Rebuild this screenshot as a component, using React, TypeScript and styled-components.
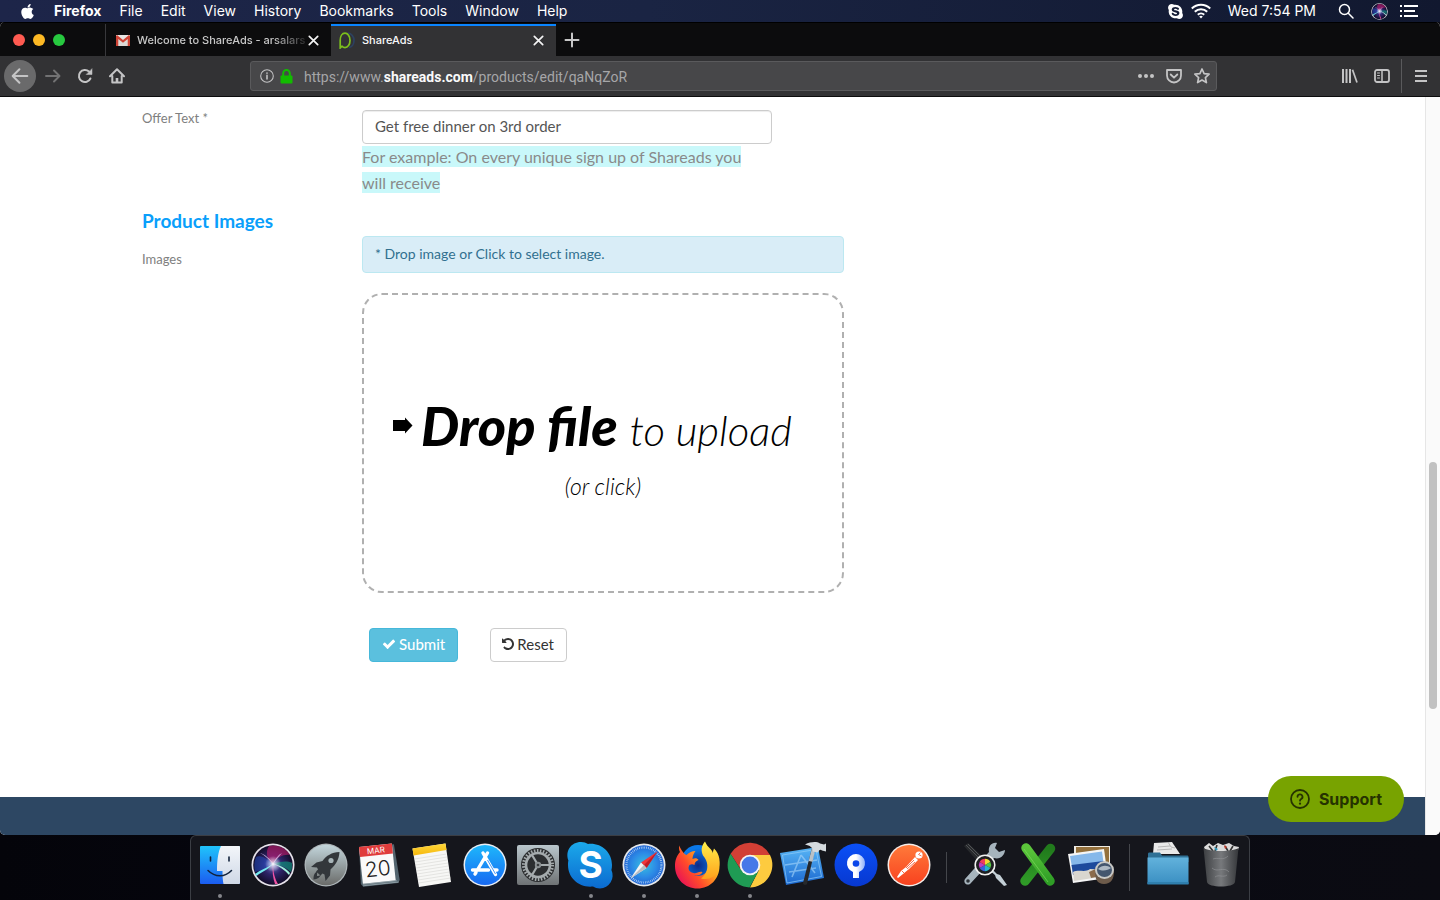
import React from "react";
import styled, { createGlobalStyle } from "styled-components";
import { FaApple, FaSkype } from "react-icons/fa";

const GlobalStyle = createGlobalStyle`
  *, *::before, *::after { box-sizing: border-box; }
  body { margin: 0; background: #07070d; }
  button, input { font: inherit; }
  svg { display: block; flex: none; }
`;

const ui = `Inter, "Liberation Sans", sans-serif`;
const site = `Lato, "Open Sans", sans-serif`;

const Desktop = styled.div`
  min-height: 100vh;
  display: flex;
  flex-direction: column;
  background: linear-gradient(90deg, #04040a, #080913 50%, #0b0b12);
  font-family: ${ui};
`;

/* ---------- system menu bar ---------- */

const MenuBar = styled.header`
  height: 22px;
  display: flex;
  align-items: center;
  justify-content: space-between;
  padding: 0 22px 0 19px;
  background: linear-gradient(90deg, #1d2549, #1a2443 45%, #11182f);
  color: #fff;
  font-size: 14px;
  line-height: 22px;
`;

const MenuList = styled.nav`
  display: flex;
  align-items: center;
  gap: 18px;
`;

const MenuItem = styled.button<{ $strong?: boolean }>`
  border: 0;
  padding: 0;
  background: none;
  color: inherit;
  font-weight: ${(p) => (p.$strong ? 700 : 400)};
`;

const StatusList = styled.div`
  display: flex;
  align-items: center;
`;

const Clock = styled.time`
  margin: 0 22px 0 17px;
`;

const StatusIcon = styled.span<{ $after?: number }>`
  display: flex;
  margin-right: ${(p) => p.$after ?? 0}px;
`;

/* ---------- browser window ---------- */

const Window = styled.section`
  flex: 1;
  display: flex;
  flex-direction: column;
  position: relative;
  overflow: hidden;
  border-radius: 5px;
  background: #fff;
`;

const TabStrip = styled.div`
  height: 34px;
  display: flex;
  padding-top: 1px;
  background: #0c0c0d;
  border-top: 1px solid #000;
`;

const WindowControls = styled.div`
  width: 106px;
  display: flex;
  align-items: center;
  gap: 8px;
  padding-left: 13px;
  border-right: 1px solid #38383b;
`;

const Light = styled.button<{ $color: string }>`
  width: 12px;
  height: 12px;
  padding: 0;
  border: 0;
  border-radius: 50%;
  background: ${(p) => p.$color};
`;

const Tab = styled.div<{ $active?: boolean }>`
  width: 225px;
  display: flex;
  align-items: center;
  padding: 0 10px 0 ${(p) => (p.$active ? 8 : 10)}px;
  color: ${(p) => (p.$active ? "#f9f9fa" : "#c8c8c8")};
  background: ${(p) => (p.$active ? "#323234" : "transparent")};
  box-shadow: ${(p) => (p.$active ? "inset 0 2px 0 #0a84ff" : "none")};
  font-size: 11px;
  font-weight: 500;
`;

const TabTitle = styled.span<{ $fade?: boolean }>`
  flex: 1;
  min-width: 0;
  margin-left: 7px;
  overflow: hidden;
  white-space: nowrap;
  mask-image: ${(p) => (p.$fade ? "linear-gradient(90deg, #000 80%, rgba(0,0,0,0.15))" : "none")};
`;

const IconButton = styled.button`
  display: flex;
  align-items: center;
  justify-content: center;
  border: 0;
  padding: 0;
  background: none;
  color: inherit;
`;

const NewTab = styled(IconButton)`
  width: 32px;
  color: #c8c8c8;
`;

const Toolbar = styled.div`
  height: 41px;
  display: flex;
  align-items: center;
  background: #323234;
  border-bottom: 1px solid #0c0c0d;
  color: #c4c4c5;
`;

const NavButtons = styled.div`
  width: 133px;
  display: flex;
  align-items: center;
  padding-left: 4px;
`;

const NavButton = styled(IconButton)<{ $round?: boolean; $dim?: boolean }>`
  width: 32px;
  height: 32px;
  margin-right: ${(p) => (p.$round ? 1 : 0)}px;
  border-radius: 50%;
  background: ${(p) => (p.$round ? "#6a6a6b" : "none")};
  color: ${(p) => (p.$dim ? "#727273" : "inherit")};
`;

const Spacer = styled.div<{ $grow: number }>`
  flex: ${(p) => p.$grow} 1 0;
`;

const AddressBar = styled.div`
  flex: 950 1 0;
  min-width: 0;
  height: 30px;
  display: flex;
  align-items: center;
  gap: 6px;
  padding: 0 6px 0 9px;
  border: 1px solid #5a5a5c;
  border-radius: 3px;
  background: #474749;
`;

const Address = styled.span`
  flex: 1;
  padding: 1px 0 0 5px;
  overflow: hidden;
  white-space: nowrap;
  font-family: Roboto, ${ui};
  font-size: 14px;
  color: #a6a6a8;
  b { color: #f9f9fa; font-weight: 700; }
`;

const AddressActions = styled.div`
  display: flex;
  align-items: center;
  gap: 12px;
`;

const ToolGroup = styled.div`
  width: 106px;
  height: 34px;
  display: flex;
  align-items: center;
`;

const ToolButton = styled(IconButton)<{ $divided?: boolean }>`
  width: ${(p) => (p.$divided ? 39 : 32)}px;
  height: 34px;
  margin-left: ${(p) => (p.$divided ? "auto" : "0")};
  border-left: ${(p) => (p.$divided ? "1px solid #5a5a5c" : "0")};
`;

/* ---------- web page ---------- */

const Viewport = styled.div`
  flex: 1;
  display: flex;
`;

const Page = styled.div`
  flex: 1;
  min-width: 0;
  display: flex;
  flex-direction: column;
  font-family: ${site};
  color: #808080;
`;

const Form = styled.form`
  width: 100%;
  max-width: 1141px;
  margin: 0 auto;
  padding: 13px 0 80px;
`;

const Row = styled.div`
  display: grid;
  grid-template-columns: 220px minmax(0, 482px);
`;

const FieldLabel = styled.label<{ $top?: number }>`
  padding-top: ${(p) => p.$top ?? 0}px;
  font-size: 13px;
  line-height: 16px;
`;

const TextInput = styled.input`
  display: block;
  width: 85%;
  height: 34px;
  padding: 0 12px 3px;
  border: 1px solid #ccc;
  border-radius: 4px;
  box-shadow: inset 0 1px 1px rgba(0, 0, 0, 0.075);
  color: #555;
  font-size: 15px;
`;

const Help = styled.p`
  width: 82%;
  margin: 0 0 14px;
  font-size: 16px;
  line-height: 26px;
  mark { padding: 1px 0; background: #c9f8fa; color: #8a8a8a; }
`;

const SectionTitle = styled.h2`
  margin: 0;
  height: 26px;
  font-size: 19px;
  line-height: 22px;
  font-weight: 700;
  color: #0a9ffb;
`;

const Notice = styled.div`
  height: 37px;
  margin-bottom: 20px;
  padding: 0 12px;
  border: 1px solid #bce8f1;
  border-radius: 4px;
  background: #d9edf7;
  color: #31708f;
  font-size: 14px;
  line-height: 34px;
`;

const DropZone = styled.label`
  height: 300px;
  display: flex;
  flex-direction: column;
  align-items: center;
  justify-content: center;
  border: 2px dashed #b0b0b0;
  border-radius: 20px;
  color: #000;
  font-style: italic;
  cursor: pointer;
`;

const HiddenFile = styled.input`
  position: absolute;
  width: 1px;
  height: 1px;
  opacity: 0;
`;

const DropTitle = styled.span`
  display: flex;
  align-items: baseline;
  padding-right: 22px;
  line-height: 82px;
  white-space: nowrap;
  svg { align-self: center; margin: 0 8px 6px 0; }
  b { font-size: 54px; font-weight: 900; }
  i { margin-left: 12px; font-size: 42px; font-weight: 300; }
`;

const DropHint = styled.span`
  font-size: 23px;
  line-height: 30px;
  font-weight: 300;
`;

const Actions = styled.div`
  grid-column: 2;
  display: flex;
  gap: 32px;
  padding: 35px 7px 0;
`;

const ActionButton = styled.button<{ $primary?: boolean }>`
  height: 34px;
  display: flex;
  align-items: center;
  gap: 3px;
  padding: 0 12px 2px ${(p) => (p.$primary ? 12 : 11)}px;
  border: 1px solid ${(p) => (p.$primary ? "#46b8da" : "#ccc")};
  border-radius: 4px;
  background: ${(p) => (p.$primary ? "#5bc0de" : "#fff")};
  color: ${(p) => (p.$primary ? "#fff" : "#333")};
  font-size: 15px;
  font-weight: ${(p) => (p.$primary ? 500 : 400)};
`;

const Footer = styled.footer`
  height: 38px;
  margin-top: auto;
  background: #2d4763;
`;

const ScrollTrack = styled.div`
  width: 15px;
  display: flex;
  flex-direction: column;
  align-items: center;
  background: #fafafa;
  border-left: 1px solid #e6e6e6;
`;

const ScrollThumb = styled.div`
  flex: 247 1 0;
  width: 8px;
  border-radius: 4px;
  background: #c1c1c1;
`;

const SupportButton = styled.button`
  position: absolute;
  right: 36px;
  bottom: 13px;
  height: 46px;
  display: flex;
  align-items: center;
  gap: 9px;
  padding: 0 22px;
  border: 0;
  border-radius: 23px;
  background: #78a300;
  color: #263300;
  font-size: 16px;
  font-weight: 700;
`;

/* ---------- dock ---------- */

const DockArea = styled.footer`
  height: 65px;
  display: flex;
  justify-content: center;
`;

const Dock = styled.div`
  display: flex;
  padding: 0 2px;
  border: 1px solid #3b3e44;
  border-bottom: 0;
  border-radius: 6px 6px 0 0;
  background: #15161c;
`;

const DockItem = styled.button`
  width: 53px;
  padding: 7px 0 0;
  border: 0;
  background: none;
  display: flex;
  flex-direction: column;
  align-items: center;
  gap: 7px;
`;

const RunningDot = styled.span`
  width: 4px;
  height: 4px;
  border-radius: 50%;
  background: #85868b;
`;

const DockDivider = styled.div<{ $tall?: boolean }>`
  width: 1px;
  height: ${(p) => (p.$tall ? 47 : 31)}px;
  margin: ${(p) => (p.$tall ? "8px 11px 0 12px" : "16px 11px 0")};
  background: #44464b;
`;

/* ---------- small icons ---------- */

const Stroke = ({ size = 16, w = 2, children }: { size?: number; w?: number; children: React.ReactNode }) => (
  <svg width={size} height={size} viewBox="0 0 16 16" fill="none" stroke="currentColor" strokeWidth={w} strokeLinecap="round" strokeLinejoin="round">
    {children}
  </svg>
);

const CloseIcon = () => (
  <svg width="15" height="15" viewBox="0 0 15 15" stroke="#f4f4f4" strokeWidth="1.7" strokeLinecap="round">
    <path d="M3.300 3.300l8.400 8.400M11.700 3.300l-8.400 8.400" />
  </svg>
);

const GmailIcon = () => (
  <svg width="14" height="11" viewBox="0 0 14 11">
    <path d="M0 0h14v11H0z" fill="#e8e6e4" />
    <path d="M2.400 11V4L7 7.600 11.600 4v7z" fill="#dcd9d6" />
    <path d="M0 11V1l1-1 6 5 6-5 1 1v10h-2.300V4L7 7.700 2.300 4v7z" fill="#cf4335" />
  </svg>
);

const ShareAdsIcon = () => (
  <svg width="16" height="17" viewBox="0 0 16 17" fill="none" strokeWidth="1.700">
    <path d="M9 1.200c3.400.3 6 3.400 6 7.200 0 3.700-2.200 6.600-5 7.100" stroke="#2c4160" />
    <path d="M1.200 16V8.500C1.200 4.300 3.200 1.200 6 1.200s5 3.100 5 7.200-2.200 7.200-5 7.200c-1.200 0-2.200-.5-3-1.400L1.200 16z" stroke="#7cc01c" />
  </svg>
);

const SiriOrb = ({ size, id }: { size: number; id: string }) => (
  <svg width={size} height={size} viewBox="0 0 44 44">
    <defs>
      <radialGradient id={`${id}a`} cx="50%" cy="50%" r="50%">
        <stop offset="0" stopColor="#6d6bc4" />
        <stop offset=".5" stopColor="#2c2266" />
        <stop offset="1" stopColor="#120c28" />
      </radialGradient>
      <radialGradient id={`${id}b`} cx="50%" cy="50%" r="50%">
        <stop offset="0" stopColor="#fff" />
        <stop offset=".3" stopColor="#fff" stopOpacity=".6" />
        <stop offset="1" stopColor="#fff" stopOpacity="0" />
      </radialGradient>
    </defs>
    <circle cx="22" cy="22" r="21.500" fill="#e6e2ea" />
    <circle cx="22" cy="22" r="19.800" fill={`url(#${id}a)`} />
    <path d="M22 21C16 17 14 9 18 3c8-2 17 2 21 9-6-1-13 2-17 9z" fill="#c41c70" opacity=".6" />
    <path d="M22 21C15 14 8 12 5 14c-2 5-2 10-1 15 5-1 12-3 18-8z" fill="#2450c8" opacity=".5" />
    <path d="M23 21c7-3 14-3 18-1 0 4 0 6-1 9-6-5-11-7-17-8z" fill="#0f8f7c" opacity=".7" />
    <path d="M22 21C16 25 9 27 4 31l1.500 2c5-4 11-6 16.500-12z" fill="#74e9ee" />
    <path d="M22 21c-1 8 0 14 2 20h3c-3-5-5-12-5-20z" fill="#f052a4" />
    <path d="M22 21c6 2 12 6 16 11l1-2c-4-5-10-8-17-9z" fill="#9ff0dc" />
    <path d="M22 21C19 15 13 11 9 10c4 2 9 6 13 11zM22 21c2-5 5-9 9-11-3 3-6 7-9 11z" fill="#d9c8f4" opacity=".8" />
    <circle cx="22" cy="21" r="8" fill={`url(#${id}b)`} />
  </svg>
);

/* ---------- dock icons ---------- */

const Pic = ({ children }: { children: React.ReactNode }) => (
  <svg width="48" height="44" viewBox="-2 0 48 44" overflow="visible">{children}</svg>
);

const Grad = ({ id, from, to }: { id: string; from: string; to: string }) => (
  <linearGradient id={id} x1="0" y1="0" x2="0" y2="1">
    <stop offset="0" stopColor={from} />
    <stop offset="1" stopColor={to} />
  </linearGradient>
);

const FinderIcon = () => (
  <Pic>
    <defs><Grad id="finL" from="#20c4fb" to="#1b5cf0" /><Grad id="finR" from="#f3f6fa" to="#cfd8e6" /></defs>
    <rect x="2" y="3" width="40" height="38" rx="1" fill="url(#finL)" />
    <path d="M23 3h18a1 1 0 0 1 1 1v36a1 1 0 0 1-1 1H25.500c-.8-4-1-8-1-13H19C19 18 20 9 23 3z" fill="url(#finR)" />
    <path d="M12.500 14v4M31 14v4" stroke="#12233c" strokeWidth="1.600" strokeLinecap="round" />
    <path d="M10 27.500c7 7 17 7 23.500 0" fill="none" stroke="#12233c" strokeWidth="1.500" strokeLinecap="round" />
  </Pic>
);

const LaunchpadIcon = () => (
  <Pic>
    <defs><Grad id="lp" from="#c3d6dc" to="#6a6b69" /></defs>
    <circle cx="22" cy="22" r="21.500" fill="#aeb6b9" />
    <circle cx="22" cy="22" r="20.300" fill="url(#lp)" />
    <path d="M35.500 9c-8 .5-13 3.500-17 9l-6 1.500L7 24l6 .5 1 2-2 2 4.500 4 2-2 2 1 1 6.500 4.500-5.500.5-6c5-4.500 8.500-9.500 9-17.500z" fill="#33373b" />
    <circle cx="27" cy="17.500" r="2.600" fill="#a7b4b8" />
    <path d="M13.500 28.500c-3 1-4 3.500-4 8 4-.5 6.500-2 7.500-5-1 1-2.500 1.500-4 1.500 0-1.500 0-3 .5-4.500z" fill="#33373b" />
  </Pic>
);

const CalendarIcon = () => (
  <Pic>
    <g transform="rotate(-6 22 22)">
      <path d="M4 3h35l2 36-2 3H4l-2-3z" fill="#53646e" />
      <path d="M4 39.500h34M4 41h36" stroke="#a3b2b8" strokeWidth=".7" fill="none" />
      <rect x="4" y="2" width="33" height="37" fill="#fafafa" />
      <rect x="4" y="2" width="33" height="10" fill="#e03c3c" />
      <text x="20.500" y="10" textAnchor="middle" fontFamily="Inter" fontSize="8" fill="#fff">MAR</text>
      <text x="20.500" y="33" textAnchor="middle" fontFamily="Inter" fontSize="21" fontWeight="300" fill="#222">20</text>
    </g>
  </Pic>
);

const NotesIcon = () => (
  <Pic>
    <defs><Grad id="nt" from="#ffd83c" to="#f6b80c" /></defs>
    <path d="M2.500 5.500L35.500.5 41 39 9 44z" fill="#f7f7f5" />
    <path d="M2.500 5.500L35.500.5l1 6.500L3.500 12.500z" fill="url(#nt)" />
    {[0, 1, 2, 3, 4, 5, 6, 7, 8].map((i) => (
      <path key={i} d={`M${4.5 + i * 0.5} ${16 + i * 3}l32-5`} stroke="#d6d6d4" strokeWidth=".6" />
    ))}
  </Pic>
);

const AppStoreIcon = () => (
  <Pic>
    <defs><Grad id="as" from="#1eb7fb" to="#1769f2" /></defs>
    <circle cx="22" cy="22" r="21.500" fill="#e9eef4" />
    <circle cx="22" cy="22" r="20" fill="url(#as)" />
    <g stroke="#fff" strokeWidth="3.400" strokeLinecap="round">
      <path d="M24.500 10L15 26M20 10l11 19M9.500 27h16M30 27h4M13 29.500l-1 1.500M31 29l1.500 2.500" />
    </g>
    <path d="M24.500 17l8 14" stroke="#1c7ff5" strokeWidth=".8" />
  </Pic>
);

const SettingsIcon = () => (
  <Pic>
    <defs><Grad id="sp" from="#b9c6cc" to="#6f7375" /></defs>
    <rect x="1" y="2" width="42" height="40" rx="2" fill="url(#sp)" />
    <circle cx="22" cy="22" r="17" fill="#2c2e30" />
    <circle cx="22" cy="22" r="14.500" fill="none" stroke="#a5abad" strokeWidth="3" strokeDasharray="1.500 1.537" />
    <circle cx="22" cy="22" r="12" fill="none" stroke="#a5abad" strokeWidth="2.600" />
    <path d="M22 22l-6-10M22 22h12M22 22l-6 10" stroke="#a5abad" strokeWidth="2.200" />
    <circle cx="22" cy="22" r="3.200" fill="#8b9092" />
    <circle cx="22" cy="22" r="1.300" fill="#3a3d3f" />
  </Pic>
);

const SkypeIcon = () => (
  <Pic>
    <defs><Grad id="sk" from="#1ba9ea" to="#0b6ad0" /></defs>
    <path d="M12-1c3 0 5 .7 7 2 13-1.500 24 8 24 21 0 2-.2 3.500-.6 5A13 13 0 0 1 31 45.500c-3 0-5-.8-7-2C10 45-1 35-1 22c0-2 .1-3 .4-4.500C-4 8 2-1 12-1z" fill="url(#sk)" />
    <text x="21.500" y="35" textAnchor="middle" fontFamily="Inter" fontSize="37" fontWeight="700" fill="#fff">S</text>
  </Pic>
);

const SafariIcon = () => (
  <Pic>
    <defs>
      <radialGradient id="sf"><stop offset="0" stopColor="#39c0df" /><stop offset=".6" stopColor="#2c8be6" /><stop offset="1" stopColor="#2367d5" /></radialGradient>
    </defs>
    <circle cx="22" cy="22" r="21.500" fill="#e6e8ea" />
    <circle cx="22" cy="22" r="19.800" fill="url(#sf)" />
    <circle cx="22" cy="22" r="17.500" fill="none" stroke="#cfe6fa" strokeWidth="2.200" strokeDasharray=".6 1.232" />
    <path d="M35.500 8.500L24.500 25 19 19.500z" fill="#f0353a" />
    <path d="M35.500 8.500L24.500 25 22 22z" fill="#c01d26" />
    <path d="M8.500 35.500L19 19.500l5.500 5.500z" fill="#f3f3f3" />
    <path d="M8.500 35.500L22 22l2.500 3z" fill="#b8bcc2" />
  </Pic>
);

const FirefoxIcon = () => (
  <Pic>
    <defs>
      <linearGradient id="ff" x1="1" y1=".1" x2="0" y2=".8"><stop offset="0" stopColor="#fff23d" /><stop offset=".35" stopColor="#ffa41e" /><stop offset=".65" stopColor="#ff4a2b" /><stop offset="1" stopColor="#e60b5c" /></linearGradient>
      <radialGradient id="fb" cx="50%" cy="60%"><stop offset="0" stopColor="#0c2a86" /><stop offset="1" stopColor="#0a78e8" /></radialGradient>
      <Grad id="fy" from="#fff04a" to="#ffa21c" />
    </defs>
    <circle cx="23" cy="19" r="17" fill="url(#fb)" />
    <path d="M4 3c0 3 0 4 1 6-4 5-5 9-5 14 0 13 10 22.500 22.500 22.500S44.500 36 44.500 23c0-5-1-9-4-13l-10 5c3 4 4 9 2 12-3 6-9 7-14 5 4 1 8 0 9-3-4-1-6 2-9 1-5-1-6-5-4-8 2-1 3-1 5 0 0-3 2-4 4-5-1-2-4-2-6-1 0-3 1-5 3-8-4 0-7 2-9 4-3-1-5-5-7.500-9.500z" fill="url(#ff)" />
    <path d="M30-1.500c-4 5-4 9-2 14 4 5 5 9 4 14-1 4-3 7-6 9 8 2 15-2 17-8 3-8 2-16-4-22-1 3-1 3-1 5-1-5-5-5-8-12z" fill="url(#fy)" />
  </Pic>
);

const ChromeIcon = () => (
  <Pic>
    <path d="M22 12h20a22.400 22.400 0 0 1-20 32.400l9-17.400z" fill="#fdcb3f" />
    <path d="M22 12h20A22.400 22.400 0 0 0 2.600 10.800L13 27z" fill="#d23f35" />
    <path d="M2.600 10.800L13 27l9 5 8-3-8.500 15.400A22.400 22.400 0 0 1 2.600 10.800z" fill="#1f9b54" />
    <circle cx="22" cy="22" r="10.300" fill="#f4f4f4" />
    <circle cx="22" cy="22" r="8.400" fill="#4678e8" />
  </Pic>
);

const XcodeIcon = () => (
  <Pic>
    <defs><Grad id="xc" from="#58b6f6" to="#1b67cf" /></defs>
    <path d="M-1 10l38-6 6 31-38 7z" fill="url(#xc)" />
    <path d="M1.500 12l33.500-5.500 5.500 27L6 40z" fill="none" stroke="#8fcbf8" strokeWidth=".7" />
    <path d="M20 12l-9 22M20 12l14 18M8 29l27-4M4 22l32-5" stroke="#a7d6fa" strokeWidth="1.600" strokeOpacity=".6" />
    <path d="M31 5l3 1-8 35c-1 1.500-4 1-4-1z" fill="#26282b" />
    <path d="M31 5l3.500.8-3 13-3.800-.8z" fill="#b9c1c6" />
    <path d="M24 1.500c6-3 12-3 15-1l4 1 2-1v8l-4-1c-1-1-2-1-3 0l-1 2-5-1c0-4-3-6-8-7z" fill="#d4dade" />
  </Pic>
);

const SourcetreeIcon = () => (
  <Pic>
    <defs><Grad id="st" from="#0b50f7" to="#0738d0" /><linearGradient id="ss"><stop offset=".5" stopColor="#fff" /><stop offset="1" stopColor="#8fb0fa" /></linearGradient></defs>
    <circle cx="22" cy="22" r="21.500" fill="url(#st)" />
    <path d="M22 11a9.300 9.300 0 0 0-3 18v6h6v-6a9.300 9.300 0 0 0-3-18z" fill="url(#ss)" />
    <circle cx="22" cy="20.500" r="3.300" fill="#0a46ea" />
  </Pic>
);

const PostmanIcon = () => (
  <Pic>
    <defs><Grad id="pm" from="#ff7a3a" to="#f8421f" /></defs>
    <circle cx="22" cy="22" r="21.500" fill="#f4ece8" />
    <circle cx="22" cy="22" r="20" fill="url(#pm)" />
    <circle cx="32" cy="12" r="3.600" fill="#fff" />
    <path d="M33.500 9.500l-2 2 3 1.500" stroke="#f8542b" strokeWidth=".8" fill="none" />
    <path d="M28 14l3 3-9 9-6 5-5 4-1-1 4-6 5-4z" fill="#fff" />
    <path d="M27 17l-8 8M28 19l-8 7M15 28l2 2" stroke="#f8603a" strokeWidth=".9" />
  </Pic>
);

const ToolsIcon = () => (
  <Pic>
    <path d="M1 3l4-3 16 15-5 5z" fill="#27292c" />
    <path d="M3 2l15 15M5 1l15 15" stroke="#5a5d60" strokeWidth=".8" />
    <path d="M42 7l-6 2-4-4 2-5c-5-1-9 3-8 9L2 36c-2 3 1 7 5 5l24-26c6 2 11-3 11-8z" fill="#a6b4bd" />
    <circle cx="5" cy="38" r="1.800" fill="#2a3036" />
    <path d="M27 24l7 7 3 1 7 10-3 1-8-8-1-3-7-6z" fill="#c3cfd6" />
    <circle cx="22" cy="22" r="9.800" fill="#1f2022" stroke="#f0f0f0" strokeWidth="1.600" />
    <g>
      {["#f3d530", "#58c545", "#27b6c9", "#3a62d8", "#c03bc0", "#ef3b5c"].map((c, i) => (
        <path key={c} d="M22 22V15.800a6.200 6.200 0 0 1 5.370 3.100z" fill={c} transform={`rotate(${i * 60} 22 22)`} />
      ))}
    </g>
  </Pic>
);

const CrossXIcon = () => (
  <Pic>
    <defs><Grad id="gx" from="#5cc63b" to="#2f9e26" /><Grad id="gd" from="#217a1c" to="#2f9a27" /></defs>
    <path d="M34.500 5.500L9 38" stroke="url(#gd)" strokeWidth="9.500" strokeLinecap="round" />
    <path d="M10 5L34 38" stroke="url(#gx)" strokeWidth="9.500" strokeLinecap="round" />
    <path d="M8 6l24 33" stroke="#84dd62" strokeWidth="1" strokeOpacity=".6" />
  </Pic>
);

const PreviewIcon = () => (
  <Pic>
    <rect x="5" y="3" width="36" height="30" fill="#efece4" />
    <rect x="7" y="4" width="33" height="20" fill="#93703c" />
    <path d="M-1 11l36-5 4 29-35 5z" fill="#f5f5f5" />
    <path d="M1 13l32-4.500 1.500 11L3 24z" fill="#86b8ea" />
    <path d="M2.500 22l32-4 1.500 9-32 5z" fill="#1e4a9c" />
    <path d="M4 29c6-3 12 1 17-3 5 0 10 1 15 0l1 7-32 5z" fill="#d9d6cf" />
    <path d="M20 29l15-7 2 10-15 3z" fill="#8b6b4c" />
    <path d="M26 28c0 8 2 13 9 13s10-5 10-13z" fill="#6d5b4b" />
    <ellipse cx="35.500" cy="27" rx="9.500" ry="9" fill="#c9c9c6" />
    <ellipse cx="35.500" cy="27" rx="7.500" ry="7" fill="#44566e" />
    <path d="M29 26c4-4 9-4 13-1-3 2-8 4-13 1z" fill="#aeb9c4" />
  </Pic>
);

const FolderIcon = () => (
  <Pic>
    <defs><Grad id="fo" from="#62b2dc" to="#3a8fc2" /></defs>
    <path d="M8 0l18-1 8 12H7z" fill="#e9e9e9" />
    <path d="M12 4l12-1M11 7l15-1M22-1l3 5 4 1" stroke="#a9a9a9" strokeWidth=".8" fill="none" />
    <path d="M2 11c0-1 .5-1.500 1.500-1.500H14l2 3h25c1 0 1.500.5 1.500 1.500v5H2z" fill="#2f7196" />
    <path d="M1.500 14.500h41V41h-41z" fill="url(#fo)" />
    <path d="M1.500 39h41v2.500h-41z" fill="#2f7fae" />
  </Pic>
);

const TrashIcon = () => (
  <Pic>
    <defs><linearGradient id="tr"><stop offset="0" stopColor="#3d3f42" /><stop offset=".5" stopColor="#77797c" /><stop offset="1" stopColor="#35373a" /></linearGradient></defs>
    <path d="M5 4l5-4 4 3 5-3 5 2 6-2 5 3 5 1-2 6H7z" fill="#dcdcdc" />
    <path d="M10 3l4 5M18 2l-2 6M26 3l3 5M34 3l-3 5" stroke="#333" strokeWidth="1.600" />
    <path d="M15 4l4 2-2 2z" fill="#2b9ec4" /><path d="M25 2l3 2-2 2z" fill="#c43b2b" />
    <path d="M4.500 5C10 9 34 9 39.500 5L36 39c-1 6-27 6-28 0z" fill="url(#tr)" />
    <path d="M14 16c5-2 10 2 15-3M13 25c5 5 12-2 17 4M16 34c4-3 8 1 12-2" stroke="#929497" strokeWidth="1" fill="none" opacity=".6" />
  </Pic>
);

type DockEntry = { name: string; icon: React.ReactNode; running?: boolean };

const apps: DockEntry[] = [
  { name: "Finder", icon: <FinderIcon />, running: true },
  { name: "Siri", icon: <SiriOrb size={44} id="dockSiri" /> },
  { name: "Launchpad", icon: <LaunchpadIcon /> },
  { name: "Calendar", icon: <CalendarIcon /> },
  { name: "Notes", icon: <NotesIcon /> },
  { name: "App Store", icon: <AppStoreIcon /> },
  { name: "System Preferences", icon: <SettingsIcon /> },
  { name: "Skype", icon: <SkypeIcon />, running: true },
  { name: "Safari", icon: <SafariIcon />, running: true },
  { name: "Firefox", icon: <FirefoxIcon />, running: true },
  { name: "Chrome", icon: <ChromeIcon />, running: true },
  { name: "Xcode", icon: <XcodeIcon /> },
  { name: "Sourcetree", icon: <SourcetreeIcon /> },
  { name: "Postman", icon: <PostmanIcon /> },
];

const utilities: DockEntry[] = [
  { name: "ColorSync Utility", icon: <ToolsIcon /> },
  { name: "CrossOver", icon: <CrossXIcon /> },
  { name: "Preview", icon: <PreviewIcon /> },
];

const places: DockEntry[] = [
  { name: "Documents", icon: <FolderIcon /> },
  { name: "Trash", icon: <TrashIcon /> },
];

const renderItems = (items: DockEntry[]) =>
  items.map((a) => (
    <DockItem key={a.name} type="button" aria-label={a.name}>
      {a.icon}
      {a.running && <RunningDot />}
    </DockItem>
  ));

const menus = ["File", "Edit", "View", "History", "Bookmarks", "Tools", "Window", "Help"];

export default function App() {
  return (
    <Desktop>
      <GlobalStyle />
      <MenuBar>
        <MenuList>
          <MenuItem aria-label="Apple"><FaApple size={17} /></MenuItem>
          <MenuItem $strong>Firefox</MenuItem>
          {menus.map((m) => <MenuItem key={m}>{m}</MenuItem>)}
        </MenuList>
        <StatusList>
          <StatusIcon $after={7}><FaSkype size={17} /></StatusIcon>
          <StatusIcon>
            <svg width="20" height="16" viewBox="0 0 20 16" fill="none" stroke="#fff" strokeWidth="2">
              <path d="M.8 5.500a13 13 0 0 1 18.400 0M3.800 8.700a8.800 8.800 0 0 1 12.400 0M6.800 11.700a4.600 4.600 0 0 1 6.400 0" />
              <path d="M10 15.500l-1.800-2a2.600 2.600 0 0 1 3.600 0z" fill="#fff" stroke="none" />
            </svg>
          </StatusIcon>
          <Clock>Wed 7:54 PM</Clock>
          <StatusIcon $after={17}>
            <Stroke w={1.5}><circle cx="6.500" cy="6.500" r="5" /><path d="M10.300 10.300L15 15" /></Stroke>
          </StatusIcon>
          <StatusIcon $after={12}><SiriOrb size={17} id="menuSiri" /></StatusIcon>
          <StatusIcon>
            <svg width="18" height="12" viewBox="0 0 18 12" fill="#fff">
              <path d="M0 0h2v2H0zM0 5h2v2H0zM0 10h2v2H0zM4 0h14v2H4zM4 5h11v2H4zM4 10h14v2H4z" />
            </svg>
          </StatusIcon>
        </StatusList>
      </MenuBar>

      <Window>
        <TabStrip>
          <WindowControls>
            <Light $color="#ff5b51" aria-label="Close window" />
            <Light $color="#fdb924" aria-label="Minimize window" />
            <Light $color="#27c93f" aria-label="Zoom window" />
          </WindowControls>
          <Tab>
            <GmailIcon />
            <TabTitle $fade>Welcome to ShareAds - arsalars</TabTitle>
            <IconButton aria-label="Close tab"><CloseIcon /></IconButton>
          </Tab>
          <Tab $active>
            <ShareAdsIcon />
            <TabTitle>ShareAds</TabTitle>
            <IconButton aria-label="Close tab"><CloseIcon /></IconButton>
          </Tab>
          <NewTab aria-label="New tab"><Stroke><path d="M8 1.500v13M1.500 8h13" /></Stroke></NewTab>
        </TabStrip>

        <Toolbar>
          <NavButtons>
            <NavButton $round aria-label="Back"><Stroke size={18} w={1.8}><path d="M14.500 8H2M7.500 2L1.500 8l6 6" /></Stroke></NavButton>
            <NavButton $dim aria-label="Forward"><Stroke w={1.9}><path d="M1 8h13M9 2.500L14.500 8 9 13.500" /></Stroke></NavButton>
            <NavButton aria-label="Reload">
              <Stroke><path d="M13.400 10.500A6 6 0 1 1 12 3.600" /><path d="M15 1v5.500H9.500z" fill="currentColor" strokeWidth=".5" /></Stroke>
            </NavButton>
            <NavButton aria-label="Home">
              <Stroke><path d="M1 8.200L8 1.300l7 6.900M3.300 8v6.500h9.400V8" /><path d="M8 14.300V10" strokeWidth="2.600" strokeLinecap="butt" /></Stroke>
            </NavButton>
          </NavButtons>
          <Spacer $grow={117} />
          <AddressBar>
            <Stroke size={14} w={1.2}><circle cx="8" cy="8" r="7.200" /><path d="M8 7.300v4M8 4.500v.3" strokeWidth="1.800" /></Stroke>
            <svg width="13" height="15" viewBox="0 0 13 15">
              <path d="M3.200 7V4.300a3.300 3.300 0 0 1 6.600 0V7" fill="none" stroke="#12bc00" strokeWidth="2" />
              <rect x=".5" y="6.500" width="12" height="8" rx="1" fill="#12bc00" />
            </svg>
            <Address>https://www.<b>shareads.com</b>/products/edit/qaNqZoR</Address>
            <AddressActions>
              <IconButton aria-label="Page actions">
                <svg width="16" height="16" viewBox="0 0 16 16" fill="currentColor"><circle cx="2" cy="8" r="2" /><circle cx="8" cy="8" r="2" /><circle cx="14" cy="8" r="2" /></svg>
              </IconButton>
              <IconButton aria-label="Save to Pocket"><Stroke w={1.8}><path d="M1 2h14v5.500a7 7 0 0 1-14 0zM4.700 6.500L8 9.700l3.300-3.200" /></Stroke></IconButton>
              <IconButton aria-label="Bookmark this page"><Stroke w={1.7}><path d="M8 1l2.100 4.600 5 .6-3.700 3.400 1 5L8 12.100l-4.400 2.500 1-5L.9 6.200l5-.6z" /></Stroke></IconButton>
            </AddressActions>
          </AddressBar>
          <Spacer $grow={117} />
          <ToolGroup>
            <ToolButton aria-label="Library">
              <svg width="16" height="14" viewBox="0 0 16 14" fill="none" stroke="currentColor" strokeWidth="2"><path d="M1 0v14M4.500 0v14M8 0v14" /><path d="M10.500.8L15 13.500" strokeWidth="1.700" /></svg>
            </ToolButton>
            <ToolButton aria-label="Sidebars">
              <Stroke w={1.8}><rect x="1" y="2" width="14" height="12" rx="2" /><path d="M8 2v12" strokeWidth="1.500" /><path d="M3.500 5h2M3.500 7.500h2M3.500 10h2" strokeWidth="1" /></Stroke>
            </ToolButton>
            <ToolButton $divided aria-label="Menu">
              <svg width="12" height="12" viewBox="0 0 12 12" stroke="currentColor" strokeWidth="1.800"><path d="M0 1h12M0 6h12M0 11h12" /></svg>
            </ToolButton>
          </ToolGroup>
        </Toolbar>

        <Viewport>
          <Page>
            <Form onSubmit={(e) => e.preventDefault()}>
              <Row>
                <FieldLabel htmlFor="offer">Offer Text *</FieldLabel>
                <div>
                  <TextInput id="offer" type="text" defaultValue="Get free dinner on 3rd order" />
                  <Help><mark>For example: On every unique sign up of Shareads you will receive</mark></Help>
                </div>
              </Row>
              <SectionTitle>Product Images</SectionTitle>
              <Row>
                <FieldLabel htmlFor="images" $top={15}>Images</FieldLabel>
                <div>
                  <Notice>* Drop image or Click to select image.</Notice>
                  <DropZone>
                    <HiddenFile id="images" type="file" accept="image/*" />
                    <DropTitle>
                      <svg width="21" height="17" viewBox="0 0 21 17"><path d="M1 3h12V.5L20.500 8.500 13 16.500V14H1z" /></svg>
                      <b>Drop file</b>
                      <i>to upload</i>
                    </DropTitle>
                    <DropHint>(or click)</DropHint>
                  </DropZone>
                </div>
                <Actions>
                  <ActionButton $primary type="submit">
                    <svg width="14" height="14" viewBox="0 0 1792 1792" fill="currentColor"><path d="M1671 566q0 40-28 68l-724 724-136 136q-28 28-68 28t-68-28l-136-136-362-362q-28-28-28-68t28-68l136-136q28-28 68-28t68 28l294 295 656-657q28-28 68-28t68 28l136 136q28 28 28 68z" /></svg>
                    Submit
                  </ActionButton>
                  <ActionButton type="reset">
                    <svg width="12" height="12" viewBox="0 128 1536 1536" fill="currentColor"><path d="M1536 896q0 156-61 298t-164 245-245 164-298 61q-172 0-327-72.5t-264-204.5q-7-10-6.5-22.5t8.5-20.5l137-138q10-9 25-9 16 2 23 12 73 95 179 147t225 52q104 0 198.500-40.500t163.500-109.500 109.500-163.500 40.500-198.500-40.500-198.500-109.500-163.500-163.500-109.500-198.500-40.500q-98 0-188 35.500t-160 101.500l137 138q31 30 14 69-17 40-59 40h-448q-26 0-45-19t-19-45v-448q0-42 40-59 39-17 69 14l130 129q107-101 244.500-156.500t284.500-55.500q156 0 298 61t245 164 164 245 61 298z" /></svg>
                    Reset
                  </ActionButton>
                </Actions>
              </Row>
            </Form>
            <Footer />
          </Page>
          <ScrollTrack>
            <Spacer $grow={365} />
            <ScrollThumb />
            <Spacer $grow={126} />
          </ScrollTrack>
        </Viewport>
        <SupportButton type="button">
          <svg width="20" height="20" viewBox="0 0 20 20" fill="none" stroke="currentColor" strokeWidth="1.800" strokeLinecap="round">
            <circle cx="10" cy="10" r="9" />
            <path d="M7.500 7.800a2.500 2.500 0 1 1 3.700 2.200c-.8.500-1.200.9-1.200 1.700" />
            <path d="M10 14.600v.1" strokeWidth="2.200" />
          </svg>
          Support
        </SupportButton>
      </Window>

      <DockArea>
        <Dock>
          {renderItems(apps)}
          <DockDivider />
          {renderItems(utilities)}
          <DockDivider $tall />
          {renderItems(places)}
        </Dock>
      </DockArea>
    </Desktop>
  );
}
